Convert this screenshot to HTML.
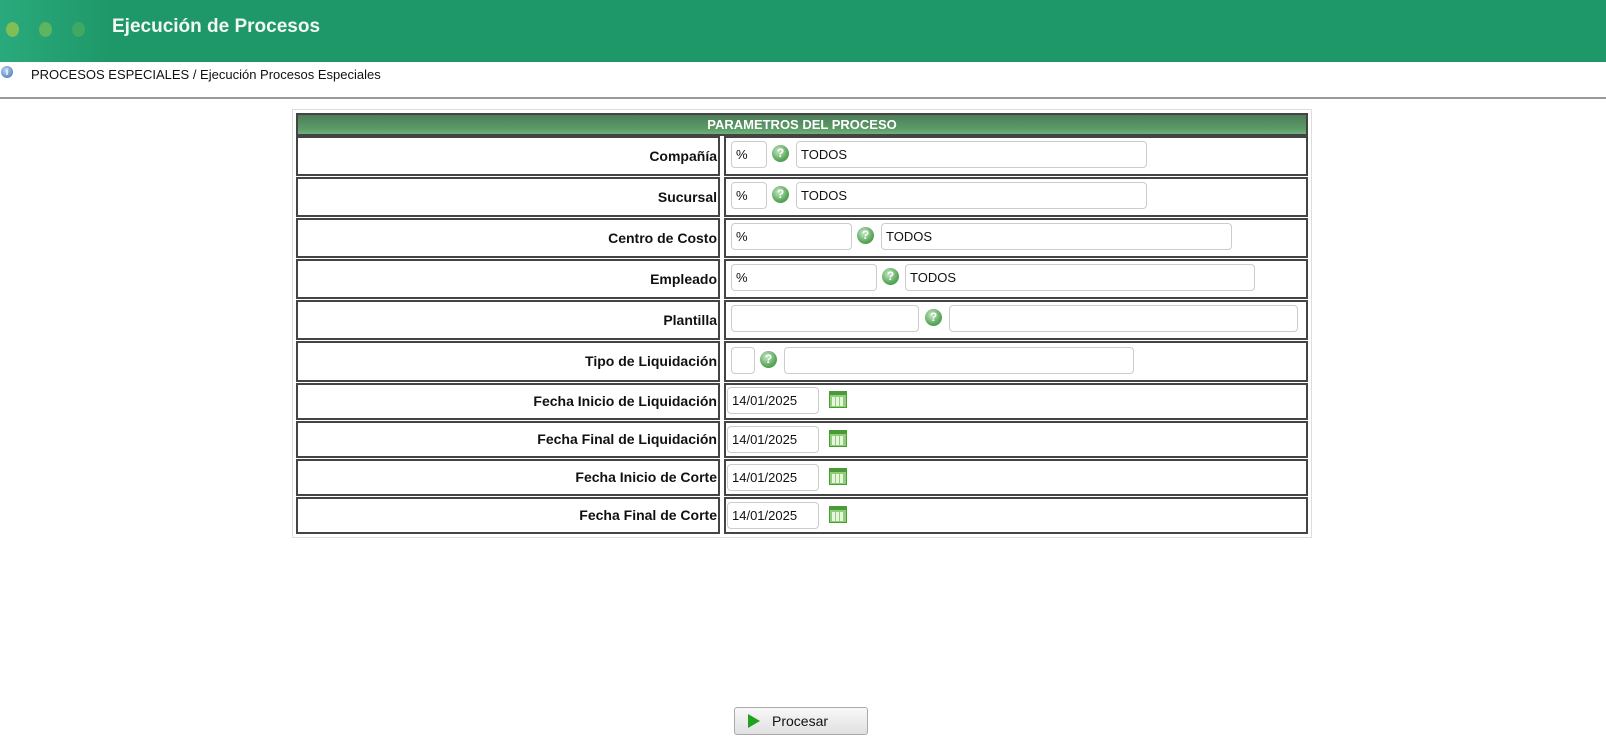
<!DOCTYPE html>
<html><head><meta charset="utf-8"><style>
body{margin:0;width:1606px;height:747px;background:#fff;font-family:"Liberation Sans",sans-serif;position:relative;overflow:hidden}
.a{position:absolute}
.hdr{left:0;top:0;width:1606px;height:62px;background:linear-gradient(90deg,#2aaa7c 0,#1e9869 110px,#1e9869 100%)}
.dot{width:13px;height:15px;border-radius:50%;top:22px}
.title{left:112px;top:16px;color:#f4f8f4;font-size:19px;font-weight:bold}
.bc{left:31px;top:67px;font-size:13px;color:#111}
.line{left:0;top:97px;width:1606px;height:2px;background:#999}
.outer{left:292px;top:109px;width:1018px;height:427px;border:1px solid #ddd}
.th{left:296px;top:113px;width:1008px;height:19px;border:2px solid #444;background:linear-gradient(#4e7d58,#5a9a66 70%,#6fb07a);color:#fff;font-weight:bold;font-size:13px;text-align:center;line-height:19px}
.lc{left:296px;width:424px;border:2px solid #444;box-sizing:border-box;text-align:right;font-weight:bold;font-size:14px;color:#111;padding-right:1px}
.vc{left:724px;width:584px;border:2px solid #444;box-sizing:border-box}
.in{height:27px;border:1px solid #ccc;border-radius:4px;box-sizing:border-box;font-size:13px;padding-left:4px;line-height:25px;color:#111;background:#fff}
.q{width:17px;height:17px;border-radius:50%;background:radial-gradient(circle at 40% 35%,#c8e8c8,#5aa85a 60%,#3b8a3b);color:#fff;font-size:12px;font-weight:bold;text-align:center;line-height:17px}
.cal{width:18px;height:17px;border:1px solid #4a9a3a;background:#8fcf78;box-sizing:border-box;
background-image:linear-gradient(#4a9a3a,#4a9a3a);background-size:100% 3px;background-repeat:no-repeat}
.cal:after{content:"";position:absolute;left:2px;top:5px;width:12px;height:9px;background:repeating-linear-gradient(90deg,#e8f6e0 0 3px,transparent 3px 4px),#8fcf78;}
.btn{left:734px;top:707px;width:134px;height:28px;border:1px solid #aaa;border-radius:3px;box-sizing:border-box;background:linear-gradient(#f8f8f8,#e0e0e0);font-size:14px;color:#111}
</style></head><body>
<div class="a hdr"></div>
<div class="a dot" style="left:6px;background:#7fbf55"></div>
<div class="a dot" style="left:39px;background:#5fb55e"></div>
<div class="a dot" style="left:72px;background:#3fa864"></div>
<div class="a title">Ejecución de Procesos</div>
<div class="a" style="left:1px;top:66px;width:12px;height:12px;border-radius:50%;background:radial-gradient(circle at 40% 35%,#bcd3f0,#3a6db0);color:#fff;font-size:9px;font-weight:bold;text-align:center;line-height:12px">i</div>
<div class="a bc">PROCESOS ESPECIALES / Ejecución Procesos Especiales</div>
<div class="a line"></div>
<div class="a outer"></div>
<div class="a th">PARAMETROS DEL PROCESO</div>

<div class="a lc" style="top:136px;height:40px;line-height:36px">Compañía</div>
<div class="a vc" style="top:136px;height:40px"></div>
<div class="a in" style="left:731px;top:141px;width:36px">%</div>
<div class="a q" style="left:772px;top:145px">?</div>
<div class="a in" style="left:796px;top:141px;width:351px">TODOS</div>

<div class="a lc" style="top:177px;height:40px;line-height:36px">Sucursal</div>
<div class="a vc" style="top:177px;height:40px"></div>
<div class="a in" style="left:731px;top:182px;width:36px">%</div>
<div class="a q" style="left:772px;top:186px">?</div>
<div class="a in" style="left:796px;top:182px;width:351px">TODOS</div>

<div class="a lc" style="top:218px;height:40px;line-height:36px">Centro de Costo</div>
<div class="a vc" style="top:218px;height:40px"></div>
<div class="a in" style="left:731px;top:223px;width:121px">%</div>
<div class="a q" style="left:857px;top:227px">?</div>
<div class="a in" style="left:881px;top:223px;width:351px">TODOS</div>

<div class="a lc" style="top:259px;height:40px;line-height:36px">Empleado</div>
<div class="a vc" style="top:259px;height:40px"></div>
<div class="a in" style="left:731px;top:264px;width:146px">%</div>
<div class="a q" style="left:882px;top:268px">?</div>
<div class="a in" style="left:905px;top:264px;width:350px">TODOS</div>

<div class="a lc" style="top:300px;height:40px;line-height:36px">Plantilla</div>
<div class="a vc" style="top:300px;height:40px"></div>
<div class="a in" style="left:731px;top:305px;width:188px"></div>
<div class="a q" style="left:925px;top:309px">?</div>
<div class="a in" style="left:949px;top:305px;width:349px"></div>

<div class="a lc" style="top:341px;height:41px;line-height:37px">Tipo de Liquidación</div>
<div class="a vc" style="top:341px;height:41px"></div>
<div class="a in" style="left:731px;top:347px;width:24px"></div>
<div class="a q" style="left:760px;top:351px">?</div>
<div class="a in" style="left:784px;top:347px;width:350px"></div>

<div class="a lc" style="top:383px;height:37px;line-height:33px">Fecha Inicio de Liquidación</div>
<div class="a vc" style="top:383px;height:37px"></div>
<div class="a in" style="left:727px;top:387px;width:92px">14/01/2025</div>
<div class="a cal" style="left:829px;top:391px"></div>

<div class="a lc" style="top:421px;height:37px;line-height:33px">Fecha Final de Liquidación</div>
<div class="a vc" style="top:421px;height:37px"></div>
<div class="a in" style="left:727px;top:426px;width:92px">14/01/2025</div>
<div class="a cal" style="left:829px;top:430px"></div>

<div class="a lc" style="top:459px;height:37px;line-height:33px">Fecha Inicio de Corte</div>
<div class="a vc" style="top:459px;height:37px"></div>
<div class="a in" style="left:727px;top:464px;width:92px">14/01/2025</div>
<div class="a cal" style="left:829px;top:468px"></div>

<div class="a lc" style="top:497px;height:37px;line-height:33px">Fecha Final de Corte</div>
<div class="a vc" style="top:497px;height:37px"></div>
<div class="a in" style="left:727px;top:502px;width:92px">14/01/2025</div>
<div class="a cal" style="left:829px;top:506px"></div>

<div class="a btn">
<div class="a" style="left:13px;top:6px;width:0;height:0;border-top:7px solid transparent;border-bottom:7px solid transparent;border-left:12px solid #22a022"></div>
<div class="a" style="left:37px;top:5px">Procesar</div>
</div>
</body></html>
